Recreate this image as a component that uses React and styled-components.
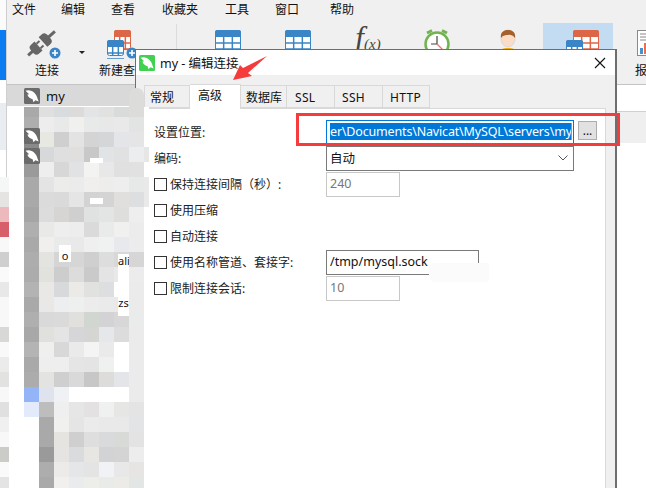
import React from 'react'
import styled, { createGlobalStyle } from 'styled-components'

const FONT = `"Noto Sans", "Noto Sans CJK SC", sans-serif`

const GlobalStyle = createGlobalStyle`
  html, body { margin: 0; padding: 0; background: #fff; }
  body { font-family: ${FONT}; font-size: 12px; color: #111; }
`

const Page = styled.div`
  position: relative;
  width: 646px;
  height: 488px;
  overflow: hidden;
  display: flex;
  background: #fff;
`
const Strip = styled.div`
  width: 6px;
  flex: none;
  display: flex;
  flex-direction: column;
`
const StripPart = styled.div`
  height: ${p => p.$h}px;
  flex: none;
  background: ${p => p.$c};
`
const Main = styled.div`
  flex: 1;
  min-width: 0;
  display: flex;
  flex-direction: column;
  border-left: 1px solid #cfcfcf;
`
const MenuBar = styled.div`
  height: 20px;
  flex: none;
  display: flex;
  align-items: center;
  background: #f0f0f0;
`
const MenuItem = styled.span`
  margin-left: ${p => p.$gap}px;
  line-height: 20px;
  white-space: nowrap;
`
const Toolbar = styled.div`
  height: 65px;
  flex: none;
  box-sizing: border-box;
  display: flex;
  padding: 3px 0 0 5px;
  background: #f0f0f0;
  border-bottom: 1px solid #c4c4c4;
`
const Tool = styled.div`
  position: relative;
  width: 70px;
  height: 61px;
  flex: none;
  margin-left: ${p => p.$gap || 0}px;
  display: flex;
  flex-direction: column;
  align-items: center;
  background: ${p => (p.$active ? '#c3dcf2' : 'transparent')};
`
const ToolIcon = styled.svg`
  width: 70px;
  height: 36px;
  flex: none;
`
const ToolLabel = styled.span`
  margin-top: 4px;
  margin-right: ${p => p.$shift || 0}px;
  white-space: nowrap;
  line-height: 16px;
`
const ToolCaret = styled.span`
  position: absolute;
  left: 67px;
  top: 28px;
  width: 0;
  height: 0;
  border-left: 3px solid transparent;
  border-right: 3px solid transparent;
  border-top: 3px solid #222;
`
const Divider = styled.div`
  width: 1px;
  height: 56px;
  flex: none;
  margin: 1px 16px 0 18px;
  background: #dcdcdc;
`
const FxMark = styled.div`
  width: 70px;
  height: 36px;
  flex: none;
  display: flex;
  justify-content: center;
  align-items: flex-start;
  color: #444;
  font-family: "Liberation Serif", serif;
  font-style: italic;
  line-height: 30px;
  font-size: 31px;
  small { font-size: 15px; margin-top: 6px; }
`
const Lower = styled.div`
  flex: 1;
  display: flex;
  min-height: 0;
`
const Sidebar = styled.div`
  width: 129px;
  flex: none;
  background: #fff;
`
const ConnRow = styled.div`
  height: 21px;
  display: flex;
  align-items: center;
  gap: 6px;
  padding-left: 17px;
  background: #d9d9d9;
  font-size: 13px;
`
const RightSide = styled.div`
  flex: 1;
  display: flex;
  flex-direction: column;
`
const RightBand = styled.div`
  margin-top: 26px;
  height: 31px;
  background: #efefef;
  border-top: 1px solid #d0d0d0;
`

const Dialog = styled.div`
  position: absolute;
  left: 135px;
  top: 49px;
  width: 482px;
  height: 460px;
  box-sizing: border-box;
  display: flex;
  flex-direction: column;
  background: #f0f0f0;
  border: 1px solid #6e6e6e;
  border-right-width: 2px;
`
const TitleBar = styled.div`
  height: 25px;
  flex: none;
  display: flex;
  align-items: center;
  gap: 5px;
  padding-left: 3px;
  background: #fff;
`
const TitleText = styled.span`
  flex: 1;
  white-space: pre;
  font-size: 12.5px;
`
const CloseIcon = styled.svg`
  width: 12px;
  height: 12px;
  margin-right: 9px;
`
const Tabs = styled.div`
  display: flex;
  align-items: flex-end;
  height: 33px;
  flex: none;
  padding-left: 8px;
`
const Tab = styled.div`
  box-sizing: border-box;
  width: ${p => p.$w}px;
  height: ${p => (p.$active ? 25 : 23)}px;
  padding-left: ${p => p.$pad}px;
  line-height: ${p => (p.$active ? 22 : 23)}px;
  background: ${p => (p.$active ? '#fff' : '#f0f0f0')};
  border: 1px solid #d9d9d9;
  border-left-width: ${p => (p.$first ? 1 : 0)}px;
  border-bottom-width: ${p => (p.$active ? 0 : 1)}px;
  margin-bottom: ${p => (p.$active ? -1 : 0)}px;
  position: relative;
  letter-spacing: ${p => (p.$latin ? 0.3 : 0)}px;
`
const Panel = styled.div`
  flex: 1;
  margin: 0 9px 0 8px;
  box-sizing: border-box;
  padding: 11px 0 0 10px;
  background: #fff;
  border-right: 1px solid #d9d9d9;
  border-top: 1px solid #d9d9d9;
`
const FormGrid = styled.div`
  display: grid;
  grid-template-columns: 172px 1fr;
  grid-auto-rows: 26px;
`
const FieldLabel = styled.label`
  display: flex;
  align-items: center;
  gap: 3px;
  height: 25px;
  box-sizing: border-box;
  padding-bottom: 1px;
  white-space: nowrap;
  color: #222;
`
const Box = styled.span`
  width: 11px;
  height: 11px;
  flex: none;
  border: 1px solid #333;
  background: #fff;
`
const Field = styled.div`
  box-sizing: border-box;
  width: ${p => p.$w}px;
  height: 25px;
  padding: 0 3px 2px;
  display: flex;
  align-items: center;
  justify-content: space-between;
  white-space: nowrap;
  overflow: hidden;
  font-size: 12.5px;
  background: #fff;
  color: ${p => (p.$off ? '#777' : '#111')};
  border: 1px solid ${p => p.$line || '#7a7a7a'};
`
const Selected = styled.span`
  display: block;
  width: 242px;
  flex: none;
  line-height: 17px;
  letter-spacing: -0.17px;
  overflow: hidden;
  color: #fff;
  background: #0078d7;
  border-right: 1px solid #e8862a;
  box-sizing: border-box;
`
const PathRow = styled.div`
  display: flex;
  gap: 4px;
`
const Browse = styled.button`
  width: 19px;
  height: 19px;
  margin-top: 1px;
  padding: 0;
  font: 12px ${FONT};
  line-height: 12px;
  color: #111;
  background: #e1e1e1;
  border: 1px solid #adadad;
`
const Chevron = styled.svg`
  width: 10px;
  height: 6px;
  flex: none;
  margin-right: 2px;
`

const Highlight = styled.div`
  position: absolute;
  left: 296px;
  top: 113px;
  width: 324px;
  height: 33px;
  box-sizing: border-box;
  border: 3px solid #f53b3b;
`
const Arrow = styled.svg`
  position: absolute;
  left: 225px;
  top: 50px;
  width: 50px;
  height: 36px;
`
const Smudge = styled.div`
  position: absolute;
  left: 429px;
  top: 263px;
  width: 60px;
  height: 19px;
  background: #fbfbfb;
  border-radius: 6px 2px 4px 6px;
`

// pixelated redaction over the connection list
const Mosaic = styled.div`
  position: absolute;
  left: 24px;
  top: 107px;
  display: grid;
  grid-template-columns: repeat(8, 15px) 5px;
  grid-template-rows: 10px;
  grid-auto-rows: 15px;
`
const MosaicTail = styled.div`
  position: absolute;
  left: 129px;
  top: 88px;
  width: 15px;
  height: 19px;
  background: #dcdcdb;
  border-radius: 7px 7px 0 0;
`
const Cell = styled.div`
  background: ${p => p.$c};
`
const EdgeMosaic = styled.div`
  position: absolute;
  left: 0;
  top: 177px;
  width: 9px;
  display: flex;
  flex-direction: column;
`
const EdgeCell = styled.div`
  height: 15px;
  background: ${p => p.$c};
`
const Glint = styled.div`
  position: absolute;
  left: ${p => p.$x}px;
  top: ${p => p.$y}px;
  width: ${p => p.$w}px;
  height: ${p => p.$h}px;
  background: #fff;
  font-size: 11px;
  line-height: 14px;
  overflow: hidden;
  text-align: center;
  padding-top: ${p => p.$pad || 0}px;
  box-sizing: border-box;
`
const ListIcon = styled.svg`
  position: absolute;
  left: 24px;
  top: ${p => p.$y}px;
  width: 16px;
  height: 16px;
`

const M = [
  ['a9a9a9','e0dfdf','d9dcde','dcdbd9','e3e4e5','e1e2e0','d9dada','dcdcdb','ffffff'],
  ['aeaeae','ecedec','e8eaea','f0f1ef','e8e9e9','e8e8e8','e9e9e9','e2e3e3','ffffff'],
  ['8a8a8a','e7e8e2','cfcfcf','e3e3e3','d5d4d4','d5d6d8','e4e5e8','e5e5e5','ffffff'],
  ['8a8a8a','d6d8d9','dfdfe0','e0dfdd','c9c8c8','e1e4e6','e1e1e1','ecedee','e6e6e6'],
  ['9a9a9a','eeeeee','d7d7d7','e0e2e4','f3f3f1','e8e8e8','e0e0e0','e1e1e1','ffffff'],
  ['a9a9a9','e4e4e4','ececea','ebebeb','f0efee','ededeb','eeeeee','e7e9e8','e9e9e9'],
  ['a9a9a9','dbdbdb','dadada','e5e5e5','d3d3d4','d4d4d4','e1dfde','dcdedf','e9e9e9'],
  ['a5a5a5','dcdcdc','d6d5d3','cfcfcf','e0e1e1','e3e5e5','dededd','eeeeee','ffffff'],
  ['afafaf','e9e9e7','eeeeee','ededed','dadada','e9eaea','f0f0ef','ececec','ffffff'],
  ['a9a9a9','f0efed','e9eaea','e8e9e8','efefef','f0f1f1','e8e9ec','ececec','ffffff'],
  ['adadad','e3e3e0','d5d5d5','d6d6d6','cfcfd0','dddddd','d8d8d8','d6d6d6','ffffff'],
  ['acacac','e1e1de','cdcdcd','dcdcdc','cacaca','e4e4e5','e9e9e9','ececec','ffffff'],
  ['b3b3b3','e9e8e5','d8d9db','ebeae7','e1e1df','dddee0','ffffff','ebebeb','ffffff'],
  ['a9a9a9','e9e8e6','eceef0','eeefef','ececec','eaeaea','e9e9e9','ebebeb','ffffff'],
  ['afafaf','d9d9d9','dadada','e1e0dd','d2d6d1','d3d3d5','d7d7d7','eaecec','ffffff'],
  ['a8a8a8','e1e0dd','e4e4e4','d6d6d9','d5d5d3','e6e7ea','dcdcdc','ebebeb','ffffff'],
  ['b4b4b4','efefee','d8d8d8','eaeaea','f4f4f4','eaeaea','ffffff','ebebeb','ffffff'],
  ['a9a9a9','eeeeee','eeeeee','e5e5e5','e4e4e4','eff0f0','ffffff','ebebeb','ffffff'],
  ['acacac','e3e3e1','cfcfcf','d9d9d9','c7c7c7','dddcda','e4e5e8','ebebeb','ffffff'],
  ['93b5f8','dfe3ee','eff1f5','ffffff','ffffff','ffffff','ffffff','ebebeb','ffffff'],
  ['e2eafb','bdbdbd','efefef','e6e6e6','e3e1e2','eff1f0','e6e6e4','e4e4e4','ffffff'],
  ['ffffff','a9a9a9','f0f0ee','e5e5e5','ebebeb','e9e9e9','e9e9e9','e2e4e6','ffffff'],
  ['ffffff','a9a9a9','e5e4e1','cfcfcf','dedede','d9dadb','d8dad8','e3e3e3','ffffff'],
  ['ffffff','9a9a9a','e5e4e2','d9dbdd','e7e6e3','d1d3d5','d4d4d4','ededed','ffffff'],
  ['ffffff','adadad','ecebe9','e5e6e7','e4e4e4','f0f2f5','e8e8e8','e6e5e3','ffffff'],
  ['ffffff','a9a9a9','f1f0ee','e9ebed','edeee9','e9ebe9','ecebe8','e2e6e4','ffffff'],
]

const EDGE = ['f5f7f6','e5e4e3','ecb9bd','d75f6a','f8f8f8','cfcfcf','fafafa','e8e8e8','f8f8f8','f8f8f8','d8d8d6','f9f9f9','ebebeb','e2e2e0','f8f8f8','e0e0e0','f0f0f0','f8f8f8','cbcbc8','fafafa','e4e4e4']

const Dolphin = ({ bg }) => (
  <>
    <rect width="16" height="16" rx="1.5" fill={bg} />
    <path d="M1.500 2.800C4 1.600 8 2 10.500 5c1.500 1.500 2.500 3.500 3 5.500l1.200 3-3.300-1.200-2 1.900-.8-3C6 10.500 4 9 3.400 6.500L5.200 6.300Z" fill="#fff" />
  </>
)

const TableGlyph = ({ x, y, w, h, color, head }) => {
  const cw = w / 3
  const rows = Math.max(1, Math.round((h - 7) / 6))
  return (
    <g>
      <rect x={x + 0.5} y={y + 0.5} width={w - 1} height={h - 1} rx="2" fill="#fff" stroke={color} />
      <path d={`M${x} ${y + 7}V${y + 2}a2 2 0 0 1 2-2H${x + w - 2}a2 2 0 0 1 2 2V${y + 7}Z`} fill={head || color} />
      <path d={`M${x + cw} ${y + 7}V${y + h}M${x + 2 * cw} ${y + 7}V${y + h}`} stroke={color} strokeWidth="1.500" />
      {Array.from({ length: rows }).map((_, i) => (
        <path key={i} d={`M${x} ${y + 13 + i * 6}H${x + w}`} stroke={color} strokeWidth="1.500" />
      ))}
    </g>
  )
}

const PlusBadge = ({ cx, cy, r }) => (
  <g>
    <circle cx={cx} cy={cy} r={r} fill="#3a85c5" />
    <path d={`M${cx - 3} ${cy}H${cx + 3}M${cx} ${cy - 3}V${cy + 3}`} stroke="#fff" strokeWidth="1.600" />
  </g>
)

export default function App() {
  return (
    <Page>
      <GlobalStyle />
      <Strip>
        <StripPart $h={30} $c="#fbfbfb" />
        <StripPart $h={50} $c="#0a7bf0" />
        <StripPart $h={23} $c="#ffffff" />
        <StripPart $h={47} $c="#e9edf2" />
      </Strip>
      <Main>
        <MenuBar>
          <MenuItem $gap={5}>文件</MenuItem>
          <MenuItem $gap={25}>编辑</MenuItem>
          <MenuItem $gap={26}>查看</MenuItem>
          <MenuItem $gap={27}>收藏夹</MenuItem>
          <MenuItem $gap={27}>工具</MenuItem>
          <MenuItem $gap={26}>窗口</MenuItem>
          <MenuItem $gap={31}>帮助</MenuItem>
        </MenuBar>
        <Toolbar>
          <Tool>
            <ToolIcon viewBox="0 0 70 36">
              <g transform="rotate(-42 31 19)" fill="#666">
                <rect x="11" y="17.500" width="7" height="3" />
                <path d="M20 13H25V25H20Q16.500 25 16.500 21V17Q16.500 13 20 13Z" />
                <rect x="25" y="15" width="4" height="2" />
                <rect x="25" y="21" width="4" height="2" />
                <path d="M31 12.500H35Q39 12.500 39 16.500V21.500Q39 25.500 35 25.500H31Z" />
                <rect x="38" y="17.500" width="9" height="3" />
              </g>
              <PlusBadge cx={43} cy={30} r={5.500} />
            </ToolIcon>
            <ToolCaret />
            <ToolLabel>连接</ToolLabel>
          </Tool>
          <Tool $gap={6}>
            <ToolIcon viewBox="0 0 70 36">
              <TableGlyph x={26} y={7} w={17} h={20} color="#dd6647" />
              <TableGlyph x={19} y={17} w={17} h={16} color="#3a85c5" />
              <PlusBadge cx={44} cy={30} r={5.500} />
            </ToolIcon>
            <ToolLabel>新建查询</ToolLabel>
          </Tool>
          <Divider />
          <Tool>
            <ToolIcon viewBox="0 0 70 36">
              <TableGlyph x={22} y={7} w={26} h={26} color="#3a85c5" />
            </ToolIcon>
          </Tool>
          <Tool>
            <ToolIcon viewBox="0 0 70 36">
              <TableGlyph x={22} y={7} w={26} h={26} color="#3a85c5" />
            </ToolIcon>
          </Tool>
          <Tool>
            <FxMark>f<small>(x)</small></FxMark>
          </Tool>
          <Tool>
            <ToolIcon viewBox="0 0 70 36">
              <circle cx="34" cy="21" r="11.500" fill="#fff" stroke="#72b34f" strokeWidth="2.500" />
              <path d="M24 10L29 7.500M44 10L39 7.500" stroke="#72b34f" strokeWidth="3" />
              <path d="M34 13V21H28" stroke="#444" strokeWidth="1.200" fill="none" />
              <path d="M34 21L41 28" stroke="#f07070" strokeWidth="1.200" />
            </ToolIcon>
          </Tool>
          <Tool>
            <ToolIcon viewBox="0 0 70 36">
              <path d="M27 30C27 26 30 25 35 25S43 26 43 30V36H27Z" fill="#efa90a" />
              <ellipse cx="35" cy="15.500" rx="7" ry="8.500" fill="#fbdcc6" stroke="#d8d8d8" />
              <path d="M28 15C27 9 31 7 35 7S43 9 42 15C40 12 37 11.500 35 12 33 12 30 12 28 15Z" fill="#a5602b" />
            </ToolIcon>
          </Tool>
          <Tool $active>
            <ToolIcon viewBox="0 0 70 36">
              <TableGlyph x={30} y={7} w={26} h={26} color="#dd6647" />
              <TableGlyph x={23} y={17} w={17} h={16} color="#3a85c5" />
            </ToolIcon>
          </Tool>
          <Tool>
            <ToolIcon viewBox="0 0 70 36">
              <rect x="24.500" y="7.500" width="24" height="25" fill="#fff" stroke="#8a8a8a" />
              <path d="M27 11H46M27 14H46M27 17H46" stroke="#888" />
              <rect x="27" y="25" width="3" height="6" fill="#4a90d0" />
              <rect x="31" y="20" width="6" height="11" fill="#e8704c" />
            </ToolIcon>
            <ToolLabel $shift={14}>报</ToolLabel>
          </Tool>
        </Toolbar>
        <Lower>
          <Sidebar>
            <ConnRow>
              <svg width="16" height="16" viewBox="0 0 16 16"><Dolphin bg="#6b6b6b" /></svg>
              my
            </ConnRow>
          </Sidebar>
          <RightSide>
            <RightBand />
          </RightSide>
        </Lower>
      </Main>

      <Dialog>
        <TitleBar>
          <svg width="16" height="16" viewBox="0 0 16 16"><Dolphin bg="#3fd14f" /></svg>
          <TitleText>my - 编辑连接</TitleText>
          <CloseIcon viewBox="0 0 12 12">
            <path d="M1 1L11 11M11 1L1 11" stroke="#111" strokeWidth="1.100" />
          </CloseIcon>
        </TitleBar>
        <Tabs>
          <Tab $w={46} $pad={5} $first>常规</Tab>
          <Tab $w={51} $pad={8} $active>高级</Tab>
          <Tab $w={46} $pad={5}>数据库</Tab>
          <Tab $w={48} $pad={8} $latin>SSL</Tab>
          <Tab $w={48} $pad={7} $latin>SSH</Tab>
          <Tab $w={47} $pad={7} $latin>HTTP</Tab>
        </Tabs>
        <Panel>
          <FormGrid>
            <FieldLabel>设置位置:</FieldLabel>
            <PathRow>
              <Field $w={248} $line="#0078d7">
                <Selected>er\Documents\Navicat\MySQL\servers\my</Selected>
              </Field>
              <Browse>...</Browse>
            </PathRow>

            <FieldLabel>编码:</FieldLabel>
            <Field $w={248}>
              自动
              <Chevron viewBox="0 0 10 6">
                <path d="M0.500 0.500L5 5 9.500 0.500" fill="none" stroke="#555" />
              </Chevron>
            </Field>

            <FieldLabel><Box />保持连接间隔（秒）:</FieldLabel>
            <Field $w={74} $off $line="#c8c8c8">240</Field>

            <FieldLabel><Box />使用压缩</FieldLabel>
            <div />

            <FieldLabel><Box />自动连接</FieldLabel>
            <div />

            <FieldLabel><Box />使用名称管道、套接字:</FieldLabel>
            <Field $w={153}>/tmp/mysql.sock</Field>

            <FieldLabel><Box />限制连接会话:</FieldLabel>
            <Field $w={74} $off $line="#c8c8c8">10</Field>
          </FormGrid>
        </Panel>
      </Dialog>

      <Smudge />
      <Highlight />
      <Arrow viewBox="225 50 50 36">
        <path d="M233 80L240 65 243 68 267 56 248 73 252 76Z" fill="#f53b3b" />
      </Arrow>

      <MosaicTail />
      <Mosaic>
        {M.flatMap((row, r) => row.map((c, i) => <Cell key={`${r}-${i}`} $c={`#${c}`} />))}
      </Mosaic>
      <ListIcon $y={128} viewBox="0 0 16 16"><Dolphin bg="#6b6b6b" /></ListIcon>
      <ListIcon $y={148} viewBox="0 0 16 16"><Dolphin bg="#6b6b6b" /></ListIcon>
      <EdgeMosaic>
        {EDGE.map((c, i) => <EdgeCell key={i} $c={`#${c}`} />)}
      </EdgeMosaic>
      <Glint $x={90} $y={158} $w={13} $h={5} />
      <Glint $x={90} $y={198} $w={13} $h={6} />
      <Glint $x={59} $y={245} $w={12} $h={17} $pad={4}>o</Glint>
      <Glint $x={118} $y={254} $w={11} $h={62} $pad={0}>ali<br /><br /><br />zs</Glint>
    </Page>
  )
}
